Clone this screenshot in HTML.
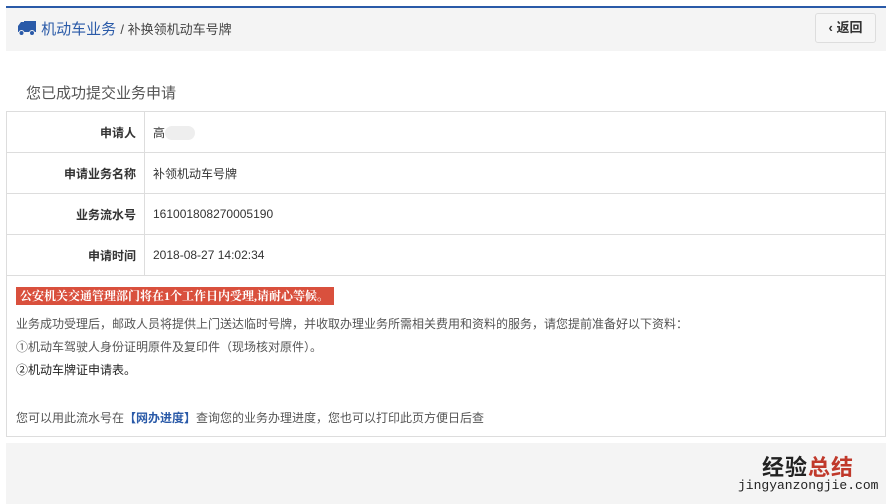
<!DOCTYPE html>
<html><head><meta charset="utf-8"><style>
*{margin:0;padding:0;box-sizing:border-box}
body{width:891px;height:504px;background:#fff;font-family:"Liberation Sans","Microsoft YaHei","Noto Sans CJK SC",sans-serif;color:#333;position:relative;overflow:hidden;font-size:12px}
.topline{position:absolute;left:6px;top:6px;width:880px;height:2px;background:#2a5aa8}
.hdr{position:absolute;left:6px;top:8px;width:880px;height:43px;background:#f4f4f4}
.crumb{position:absolute;left:17px;top:19px;font-size:15px;color:#2a5aa8;line-height:22px}
.crumb span{font-size:13px;color:#444}
.back{position:absolute;left:815px;top:13px;width:61px;height:30px;border:1px solid #ddd;border-radius:3px;background:#f6f6f6;font-size:13px;color:#333;line-height:28px;text-align:center;font-weight:bold}
.title{position:absolute;left:26px;top:82px;font-size:15px;color:#555}
table{position:absolute;left:6px;top:111px;width:880px;border-collapse:collapse}
td{border:1px solid #ddd;height:41px;font-size:12px}
td.l{width:138px;text-align:right;padding-right:8px;font-weight:bold;color:#333;background:#fff}
td.v{padding-left:8px;color:#333}
.note{position:absolute;left:6px;top:275px;width:880px;height:162px;border:1px solid #ddd;border-top:none}
.red{position:absolute;left:9px;top:12px;width:318px;height:18px;background:#d9503d;color:#fff;font-weight:bold;font-size:12px;line-height:18px;padding-left:4px;font-family:"Liberation Serif","Noto Serif CJK SC",serif}
.ln{position:absolute;left:9px;font-size:12px;color:#555}
.foot{position:absolute;left:6px;top:443px;width:880px;height:61px;background:#f4f4f4}
</style></head><body>
<div class="topline"></div>
<div class="hdr"></div>
<div class="crumb"><svg width="20" height="16" viewBox="0 0 20 16" style="vertical-align:-2px"><path d="M7 1h12v11H7z M1 6l3-4h4v10H1z" fill="#2a5aa8"/><circle cx="4.5" cy="13" r="2.5" fill="#2a5aa8" stroke="#f4f4f4"/><circle cx="15" cy="13" r="2.5" fill="#2a5aa8" stroke="#f4f4f4"/></svg> 机动车业务 <span>/ 补换领机动车号牌</span></div>
<div class="back">‹ 返回</div>
<div class="title">您已成功提交业务申请</div>
<table>
<tr><td class="l">申请人</td><td class="v">高<span style="display:inline-block;width:30px;height:14px;background:#eee;border-radius:7px;vertical-align:middle"></span></td></tr>
<tr><td class="l">申请业务名称</td><td class="v">补领机动车号牌</td></tr>
<tr><td class="l">业务流水号</td><td class="v">161001808270005190</td></tr>
<tr><td class="l">申请时间</td><td class="v">2018-08-27 14:02:34</td></tr>
</table>
<div class="note">
<div class="red">公安机关交通管理部门将在1个工作日内受理,请耐心等候。</div>
<div class="ln" style="top:40px">业务成功受理后，邮政人员将提供上门送达临时号牌，并收取办理业务所需相关费用和资料的服务，请您提前准备好以下资料：</div>
<div class="ln" style="top:63px">①机动车驾驶人身份证明原件及复印件（现场核对原件）。</div>
<div class="ln" style="top:86px;color:#222">②机动车牌证申请表。</div>
<div class="ln" style="top:134px">您可以用此流水号在<b style="color:#2a5aa8">【网办进度】</b>查询您的业务办理进度，您也可以打印此页方便日后查</div>
</div>
<div class="foot"></div>
<div style="position:absolute;left:762px;top:450px;font-size:22px;font-weight:bold;color:#222;letter-spacing:1px">经验<span style="color:#c0392b">总结</span></div>
<div style="position:absolute;left:738px;top:478px;font-size:13px;color:#222;font-family:'Liberation Mono',monospace">jingyanzongjie.com</div>
</body></html>
